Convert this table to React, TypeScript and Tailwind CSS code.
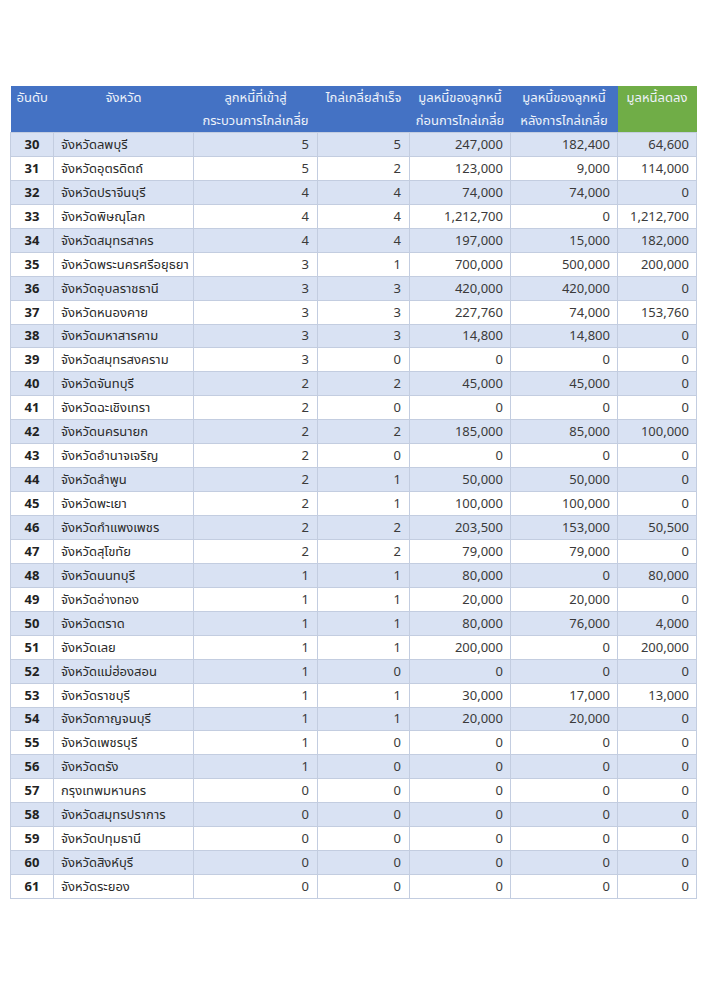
import React from "react";

type Row = [number, string, number, number, string, string, string];

const rows: Row[] = [
    [30, "จังหวัดลพบุรี", 5, 5, "247,000", "182,400", "64,600"],
    [31, "จังหวัดอุตรดิตถ์", 5, 2, "123,000", "9,000", "114,000"],
    [32, "จังหวัดปราจีนบุรี", 4, 4, "74,000", "74,000", "0"],
    [33, "จังหวัดพิษณุโลก", 4, 4, "1,212,700", "0", "1,212,700"],
    [34, "จังหวัดสมุทรสาคร", 4, 4, "197,000", "15,000", "182,000"],
    [35, "จังหวัดพระนครศรีอยุธยา", 3, 1, "700,000", "500,000", "200,000"],
    [36, "จังหวัดอุบลราชธานี", 3, 3, "420,000", "420,000", "0"],
    [37, "จังหวัดหนองคาย", 3, 3, "227,760", "74,000", "153,760"],
    [38, "จังหวัดมหาสารคาม", 3, 3, "14,800", "14,800", "0"],
    [39, "จังหวัดสมุทรสงคราม", 3, 0, "0", "0", "0"],
    [40, "จังหวัดจันทบุรี", 2, 2, "45,000", "45,000", "0"],
    [41, "จังหวัดฉะเชิงเทรา", 2, 0, "0", "0", "0"],
    [42, "จังหวัดนครนายก", 2, 2, "185,000", "85,000", "100,000"],
    [43, "จังหวัดอำนาจเจริญ", 2, 0, "0", "0", "0"],
    [44, "จังหวัดลำพูน", 2, 1, "50,000", "50,000", "0"],
    [45, "จังหวัดพะเยา", 2, 1, "100,000", "100,000", "0"],
    [46, "จังหวัดกำแพงเพชร", 2, 2, "203,500", "153,000", "50,500"],
    [47, "จังหวัดสุโขทัย", 2, 2, "79,000", "79,000", "0"],
    [48, "จังหวัดนนทบุรี", 1, 1, "80,000", "0", "80,000"],
    [49, "จังหวัดอ่างทอง", 1, 1, "20,000", "20,000", "0"],
    [50, "จังหวัดตราด", 1, 1, "80,000", "76,000", "4,000"],
    [51, "จังหวัดเลย", 1, 1, "200,000", "0", "200,000"],
    [52, "จังหวัดแม่ฮ่องสอน", 1, 0, "0", "0", "0"],
    [53, "จังหวัดราชบุรี", 1, 1, "30,000", "17,000", "13,000"],
    [54, "จังหวัดกาญจนบุรี", 1, 1, "20,000", "20,000", "0"],
    [55, "จังหวัดเพชรบุรี", 1, 0, "0", "0", "0"],
    [56, "จังหวัดตรัง", 1, 0, "0", "0", "0"],
    [57, "กรุงเทพมหานคร", 0, 0, "0", "0", "0"],
    [58, "จังหวัดสมุทรปราการ", 0, 0, "0", "0", "0"],
    [59, "จังหวัดปทุมธานี", 0, 0, "0", "0", "0"],
    [60, "จังหวัดสิงห์บุรี", 0, 0, "0", "0", "0"],
    [61, "จังหวัดระยอง", 0, 0, "0", "0", "0"],
];

const cell = "border border-[#c3cde0] h-[23.94px] py-0 leading-none";

export default function App() {
    return (
        <div
            className="w-[707px] h-[1000px] bg-white pt-[86px] pl-[10px]"
            style={{ fontFamily: '"Noto Sans", "Noto Sans Thai", "DejaVu Sans", sans-serif' }}
        >
            <table className="border-collapse table-fixed w-[686px] text-[13px] text-[#3a3a3a]">
                <colgroup>
                    <col className="w-[43px]" />
                    <col className="w-[140px]" />
                    <col className="w-[124px]" />
                    <col className="w-[92px]" />
                    <col className="w-[101px]" />
                    <col className="w-[107px]" />
                    <col className="w-[79px]" />
                </colgroup>
                <thead>
                    <tr className="h-[46px] text-[#eef2fa] align-top leading-[23px]">
                        <th className="bg-[#4472c4] font-normal text-left pl-[6px] pt-0">อันดับ</th>
                        <th className="bg-[#4472c4] font-normal text-center">จังหวัด</th>
                        <th className="bg-[#4472c4] font-normal text-center">
                            ลูกหนี้ที่เข้าสู่
                            <br />
                            กระบวนการไกล่เกลี่ย
                        </th>
                        <th className="bg-[#4472c4] font-normal text-center">ไกล่เกลี่ยสำเร็จ</th>
                        <th className="bg-[#4472c4] font-normal text-center">
                            มูลหนี้ของลูกหนี้
                            <br />
                            ก่อนการไกล่เกลี่ย
                        </th>
                        <th className="bg-[#4472c4] font-normal text-center">
                            มูลหนี้ของลูกหนี้
                            <br />
                            หลังการไกล่เกลี่ย
                        </th>
                        <th className="bg-[#70ad47] font-normal text-center">มูลหนี้ลดลง</th>
                    </tr>
                </thead>
                <tbody>
                    {rows.map((r, i) => (
                        <tr key={r[0]} className={i % 2 === 0 ? "bg-[#d9e2f3]" : "bg-white"}>
                            <td className={`${cell} text-center font-bold text-[#222]`}>{r[0]}</td>
                            <td className={`${cell} text-left pl-[7px] text-[#2a2a2a]`}>{r[1]}</td>
                            <td className={`${cell} text-right pr-[8px]`}>{r[2]}</td>
                            <td className={`${cell} text-right pr-[8px]`}>{r[3]}</td>
                            <td className={`${cell} text-right pr-[7px]`}>{r[4]}</td>
                            <td className={`${cell} text-right pr-[7px]`}>{r[5]}</td>
                            <td className={`${cell} text-right pr-[7px]`}>{r[6]}</td>
                        </tr>
                    ))}
                </tbody>
            </table>
        </div>
    );
}
